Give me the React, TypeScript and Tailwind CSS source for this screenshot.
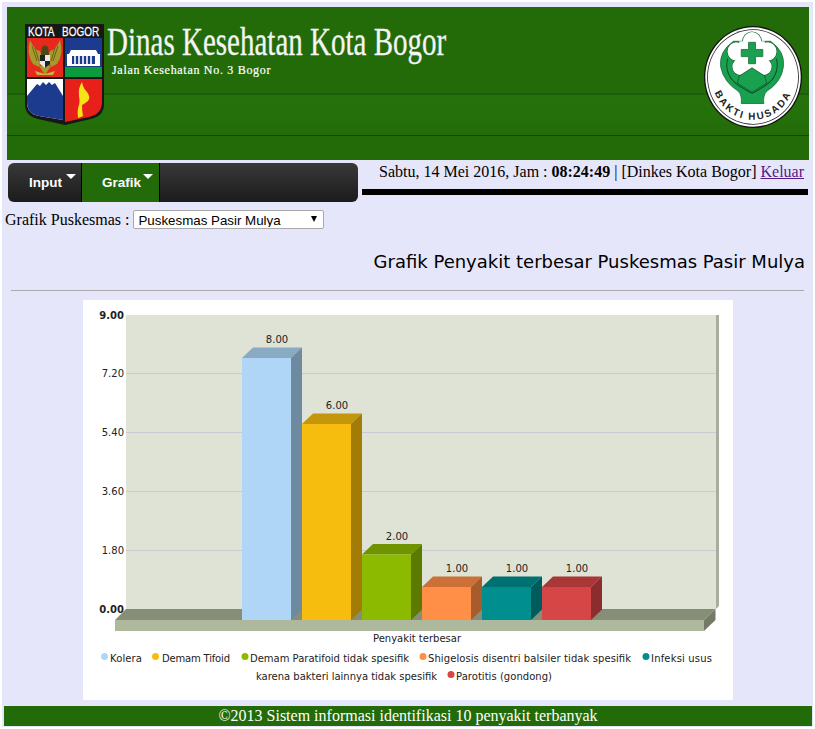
import React from 'react';

const serif = "font-['Liberation_Serif','Times_New_Roman',serif]";

const bars = [
  { x: 242, top: 358, label: '8.00', face: '#b0d6f7', roof: '#8aa9c3', side: '#6e8aa1' },
  { x: 302, top: 424, label: '6.00', face: '#f6bd0f', roof: '#c4960b', side: '#a37c06' },
  { x: 362, top: 554.5, label: '2.00', face: '#8bba00', roof: '#6f9400', side: '#5c7a00' },
  { x: 422, top: 587, label: '1.00', face: '#ff8e46', roof: '#cb7138', side: '#a65c2d' },
  { x: 482, top: 587, label: '1.00', face: '#008e8e', roof: '#007171', side: '#005c5c' },
  { x: 542, top: 587, label: '1.00', face: '#d64646', roof: '#aa3737', side: '#8b2d2d' },
];

const axis = [
  { y: 315, label: '9.00', bold: true },
  { y: 373.5, label: '7.20' },
  { y: 432.5, label: '5.40' },
  { y: 491.5, label: '3.60' },
  { y: 550.5, label: '1.80' },
  { y: 609, label: '0.00', bold: true },
];

const legend = [
  { dot: 104.5, y: 657, color: '#b0d6f7', x: 110, w: 32, text: 'Kolera' },
  { dot: 155.5, y: 657, color: '#f6bd0f', x: 162, w: 68, text: 'Demam Tifoid' },
  { dot: 245, y: 657, color: '#8bba00', x: 250, w: 159, text: 'Demam Paratifoid tidak spesifik' },
  { dot: 423, y: 657, color: '#ff8e46', x: 428, w: 203, text: 'Shigelosis disentri balsiler tidak spesifik' },
  { dot: 646, y: 657, color: '#008e8e', x: 651, w: 61, text: 'Infeksi usus' },
  { dot: 451, y: 675, color: '#d64646', x: 456, w: 96, text: 'Parotitis (gondong)' },
];

const BogorCrest = () => (
  <svg width="80" height="102" viewBox="0 0 80 102" className="shrink-0">
    <path d="M0 0H79V80Q79 92 66 95L40 101L13 95Q0 92 0 80Z" fill="#171717" />
    <g fill="#fff" fontSize="10" fontFamily="'Liberation Sans',sans-serif" stroke="#fff" strokeWidth="0.2" transform="scale(1,1.25)">
      <text x="3" y="10">KOTA</text>
      <text x="37" y="10">BOGOR</text>
    </g>
    {/* garuda */}
    <rect x="2" y="14" width="36" height="39" fill="#e8271d" />
    <path d="M5 16Q1 30 8 40L14 43L17 33L15 27Q10 27 5 16Z" fill="#a59a2b" />
    <path d="M35 16Q39 30 32 40L26 43L23 33L25 27Q30 27 35 16Z" fill="#a59a2b" />
    <path d="M7 22L12 37M10 24L14 37M33 22L28 37M30 24L26 37" stroke="#5c5518" strokeWidth="0.8" />
    <path d="M17 23Q20 20 23 23L24 31H16Z" fill="#4d4716" />
    <path d="M14 42L20 51L26 42Z" fill="#a59a2b" />
    <path d="M10 47L20 50L30 47L28 51H12Z" fill="#c2b542" />
    <path d="M15 31H25V40L20 44L15 40Z" fill="#e8e8e8" />
    <path d="M15 31H20V37H15ZM20 37H25V40L20 44Z" fill="#222" />
    {/* building */}
    <rect x="40" y="14" width="37" height="39" fill="#1c3a8e" />
    <rect x="40" y="43" width="37" height="10" fill="#0c9b3a" />
    <path d="M46 26H71L73 30H75V42H42V30H44Z" fill="#fff" />
    <rect x="47" y="32" width="23" height="8" fill="#1c3a8e" />
    <path d="M50 32V40M54 32V40M58 32V40M62 32V40M66 32V40" stroke="#fff" strokeWidth="1.6" />
    {/* mountain */}
    <path d="M2 55H38V96L14 92Q2 90 2 78Z" fill="#fff" />
    <path d="M2 72L12 60L15 62L18 58L21 61L24 58L27 61L30 59L38 72V96L14 92Q2 90 2 78Z" fill="#1c3a8e" />
    {/* flame */}
    <path d="M40 55H77V78Q77 90 64 93L40 98Z" fill="#e8201a" />
    <path d="M57 58Q58 64 62 68Q66 73 63 77Q59 80 57 81Q57 87 58 92L53 94Q52 86 54 81Q55 78 54 72Q53 64 57 58Z" fill="#f6e417" />
  </svg>
);

const BaktiHusadaLogo = () => (
  <svg width="98" height="102" viewBox="0 0 100 100" preserveAspectRatio="none" className="shrink-0">
    <defs>
      <path id="husada-arc" d="M8 50A42 42 0 0 0 92 50" />
    </defs>
    <circle cx="50" cy="50" r="50" fill="#111" />
    <circle cx="50" cy="50" r="48.7" fill="#fff" />
    <circle cx="50" cy="50" r="46.8" fill="#222" />
    <circle cx="50" cy="50" r="46" fill="#fff" />
    {/* hands */}
    <path d="M30 15Q15 25 17 40Q20 55 35 64Q39 68 38 76H61Q60 68 64 64Q79 55 81 40Q83 25 68 15Z" fill="#1aa14f" stroke="#14693a" strokeWidth="0.8" />
    <path d="M24 32Q20 50 38 60Q44 64 49 66Q54 64 60 60Q78 50 74 32" fill="none" stroke="#0f4f2a" strokeWidth="1" />
    {/* flower */}
    <g fill="#14693a">
      <circle cx="49" cy="15.5" r="10.2" />
      <circle cx="33" cy="25" r="9.7" />
      <circle cx="65" cy="25" r="9.7" />
      <circle cx="37" cy="40" r="8.7" />
      <circle cx="61" cy="40" r="8.7" />
    </g>
    <g fill="#fff">
      <circle cx="49" cy="15.5" r="9.5" />
      <circle cx="33" cy="25" r="9" />
      <circle cx="65" cy="25" r="9" />
      <circle cx="37" cy="40" r="8" />
      <circle cx="61" cy="40" r="8" />
      <rect x="36" y="15" width="26" height="30" />
    </g>
    <path d="M36 49L49 41L62 49L64 56L49 65L34 56Z" fill="#1aa14f" stroke="#0f4f2a" strokeWidth="0.7" />
    <path d="M45.5 16H52.5V23H60V30H52.5V37H45.5V30H38V23H45.5Z" fill="#1aa14f" stroke="#14693a" strokeWidth="0.8" />
    <text fontSize="10" fontWeight="700" fill="#222" fontFamily="'Liberation Sans',sans-serif" letterSpacing="2">
      <textPath href="#husada-arc" startOffset="50%" textAnchor="middle">BAKTI HUSADA</textPath>
    </text>
  </svg>
);

const ChartText = (props: React.SVGProps<SVGTextElement>) => (
  <text fontSize="10" fill="#222" fontFamily="'DejaVu Sans',Verdana,sans-serif" {...props} />
);

const DiseaseChart = () => (
  <svg width="650" height="400" viewBox="83 300 650 400" className="block">
    <path d="M716 315H719V606L716 609Z" fill="#a9ad9f" />
    <rect x="126" y="315" width="590" height="294" fill="#dee3d5" />
    {axis.map((a) => (
      <g key={a.label}>
        {!a.bold && <line x1="126" x2="716" y1={a.y} y2={a.y} stroke="#c9cbd4" strokeWidth="1" />}
        <ChartText x="124" y={a.y + 3.5} textAnchor="end" fontWeight={a.bold ? 700 : 400}>{a.label}</ChartText>
      </g>
    ))}
    <path d="M115 620L126 609H715.5L704 620Z" fill="#868e77" />
    <rect x="115" y="620" width="589" height="11" fill="#adb89d" />
    <path d="M704 620L715.5 609V620L704 631Z" fill="#747a66" />
    {bars.map((b) => (
      <g key={b.x}>
        <path d={`M${b.x} ${b.top}L${b.x + 11} ${b.top - 10.5}H${b.x + 60}L${b.x + 49} ${b.top}Z`} fill={b.roof} />
        <path d={`M${b.x + 49} ${b.top}L${b.x + 60} ${b.top - 10.5}V609.5L${b.x + 49} 620Z`} fill={b.side} />
        <rect x={b.x} y={b.top} width="49" height={620 - b.top} fill={b.face} />
        <ChartText x={b.x + 35} y={b.top - 15} textAnchor="middle">{b.label}</ChartText>
      </g>
    ))}
    <ChartText x="373" y="642" textLength="88">Penyakit terbesar</ChartText>
    {legend.map((l) => (
      <g key={l.text}>
        <circle cx={l.dot} cy={l.y - 0.5} r="3.5" fill={l.color} />
        <ChartText x={l.x} y={l.y + 5} textLength={l.w}>{l.text}</ChartText>
      </g>
    ))}
    <ChartText x="256" y="680" textLength="181">karena bakteri lainnya tidak spesifik</ChartText>
  </svg>
);

export default function App() {
  return (
    <div className={`h-[729px] w-[815px] overflow-hidden bg-white px-[2px] pt-[2px] text-black ${serif}`}>
      <div className="h-[725px] bg-[#e6e6fa] pt-[5px]">
        {/* Banner */}
        <header className="ml-[5px] mr-[4px] flex h-[153px] items-start justify-between bg-[linear-gradient(to_bottom,#236b09_0,#236b09_86px,#1e5e08_86px,#1e5e08_88px,#26710c_88px,#247009_110px,#236b09_128px,#0f4a03_128px,#0f4a03_129px,#236b09_129px,#236b09_153px)] pl-[18px] pr-[7px]">
          <div className="mt-[17px] flex">
            <BogorCrest />
            <div className="-mt-[1px] ml-[2px]">
              <h1 className="origin-top-left whitespace-nowrap text-[39px] leading-[38px] text-[#f4f4f4] [-webkit-text-stroke:0.3px_#f4f4f4] [transform:scaleX(0.744)]">Dinas Kesehatan Kota Bogor</h1>
              <p className="ml-[5px] mt-[3px] text-[12px] leading-[13px] tracking-[0.7px] text-white [-webkit-text-stroke:0.2px_#ffffff]">Jalan Kesehatan No. 3 Bogor</p>
            </div>
          </div>
          <div className="mt-[19px]">
            <BaktiHusadaLogo />
          </div>
        </header>

        {/* Menu and session info */}
        <div className="mt-[3px] ml-[6px] flex h-[39px]">
          <nav className="flex h-[39px] w-[350px] overflow-hidden rounded-[6px] bg-[linear-gradient(to_bottom,#393939,#1b1b1b)] font-['Liberation_Sans',Arial,sans-serif] text-[13.5px] font-bold text-white">
            <a className="relative flex w-[74px] items-center border-r border-black pl-[21px] pt-[1px]">
              Input
              <span className="absolute left-[58px] top-[11px] h-0 w-0 border-x-[5px] border-t-[5px] border-x-transparent border-t-white" />
            </a>
            <a className="relative flex w-[78px] items-center border-r border-black bg-[#236b09] pl-[20px] pt-[1px]">
              Grafik
              <span className="absolute left-[61px] top-[11px] h-0 w-0 border-x-[5px] border-t-[5px] border-x-transparent border-t-white" />
            </a>
          </nav>
          <div className="ml-[4px] w-[446px]">
            <p className="h-[26px] pr-[4px] text-right text-[16px] leading-[18px]">
              Sabtu, 14 Mei 2016, Jam : <b>08:24:49</b> | [Dinkes Kota Bogor]{' '}
              <a className="text-[#551a8b] underline">Keluar</a>
            </p>
            <div className="h-[6px] bg-black" />
          </div>
        </div>

        {/* Puskesmas filter */}
        <div className="mt-[8px] ml-[3px] flex h-[19px] items-center text-[16px]">
          <label>Grafik Puskesmas :</label>
          <div className="relative ml-[4px]">
            <select className="block h-[19px] w-[191px] appearance-none rounded-[2px] border border-[#a9a9a9] bg-white pb-[1px] pl-[4px] font-['Liberation_Sans',Arial,sans-serif] text-[13.33px]">
              <option>Puskesmas Pasir Mulya</option>
            </select>
            <span className="pointer-events-none absolute right-[7px] top-[6px] h-0 w-0 border-x-[3px] border-t-[6px] border-x-transparent border-t-black" />
          </div>
        </div>

        <h2 className="mt-[21px] pr-[8px] text-right font-['DejaVu_Sans',Verdana,sans-serif] text-[18px] leading-[24px]">
          Grafik Penyakit terbesar Puskesmas Pasir Mulya
        </h2>
        <hr className="ml-[9px] mr-[9px] mt-[16px] border-t border-[#a9a9a9]" />

        <div className="ml-[81px] mt-[9px] w-[650px] bg-white">
          <DiseaseChart />
        </div>

        <footer className="ml-[2px] mr-[1px] mt-[6px] h-[20px] bg-[#236b09] text-center text-[16px] leading-[20px] text-white">
          ©2013 Sistem informasi identifikasi 10 penyakit terbanyak
        </footer>
      </div>
    </div>
  );
}
